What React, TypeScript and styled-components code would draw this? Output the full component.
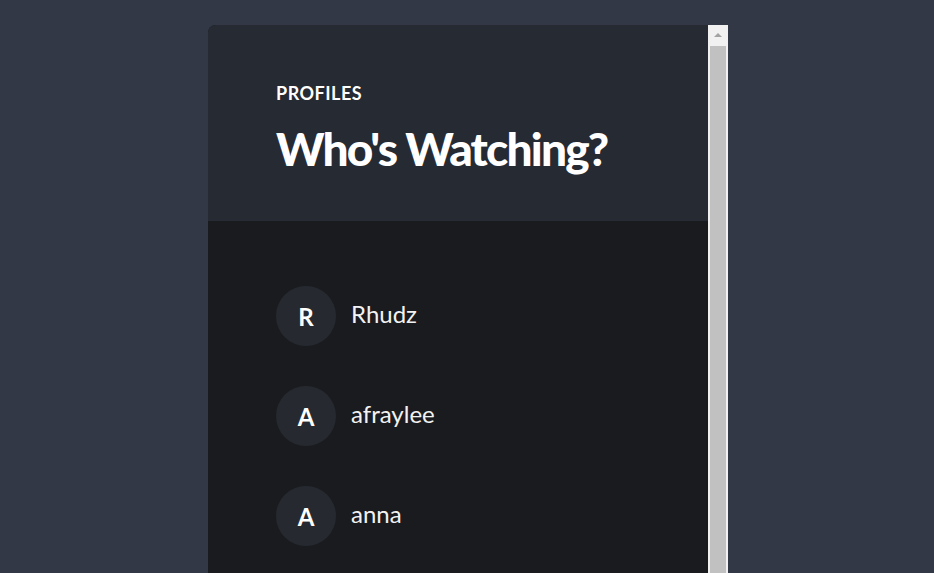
import React from "react";
import styled, { createGlobalStyle } from "styled-components";

const GlobalStyle = createGlobalStyle`
  html, body {
    margin: 0;
    padding: 0;
    overflow: hidden;
    background: #333846;
    font-family: "Lato", "Liberation Sans", sans-serif;
  }
`;

const Page = styled.div`
  display: flex;
  justify-content: center;
  padding: 25px 0 0 2px;
`;

const Panel = styled.div`
  display: flex;
  width: 520px;
  height: 640px;
  border-radius: 8px 0 0 0;
  overflow: hidden;
`;

const Content = styled.div`
  width: 500px;
  background: #1a1b1f;
`;

const ScrollBar = styled.div`
  width: 20px;
  background: #f1f1f1;
  display: flex;
  flex-direction: column;
`;

const ArrowButton = styled.div`
  height: 17px;
  display: flex;
  align-items: center;
  justify-content: center;
  padding-top: 2px;
  box-sizing: border-box;

  &::before {
    content: "";
    width: 0;
    height: 0;
    border-left: 4px solid transparent;
    border-right: 4px solid transparent;
    border-bottom: 4px solid #a3a3a3;
  }
`;

const Thumb = styled.div`
  flex: 1;
  margin: 4px 2px 0;
  background: #c1c1c1;
`;

const Header = styled.header`
  background: #262a32;
  height: 196px;
  box-sizing: border-box;
  padding: 58px 68px 0;
`;

const Eyebrow = styled.div`
  color: #ffffff;
  font-size: 18px;
  font-weight: 700;
  letter-spacing: 0.5px;
  line-height: 20px;
`;

const Title = styled.h1`
  margin: 20px 0 0;
  color: #ffffff;
  font-size: 46px;
  font-weight: 900;
  letter-spacing: -1.8px;
  line-height: 52px;
`;

const ProfileList = styled.ul`
  list-style: none;
  margin: 0;
  padding: 65px 68px 90px;
  display: flex;
  flex-direction: column;
  gap: 40px;
`;

const ProfileRow = styled.li`
  display: flex;
  align-items: center;
  gap: 15px;
  height: 60px;
`;

const Avatar = styled.div`
  width: 60px;
  height: 60px;
  border-radius: 50%;
  background: #262a30;
  color: #ffffff;
  display: flex;
  align-items: center;
  justify-content: center;
  font-size: 24px;
  font-weight: 700;
`;

const Name = styled.span`
  color: #f2f2f2;
  font-size: 24px;
  font-weight: 400;
  margin-top: -6px;
`;

const profiles = ["Rhudz", "afraylee", "anna"];

export default function App() {
  return (
    <>
      <GlobalStyle />
      <Page>
        <Panel>
          <Content>
            <Header>
              <Eyebrow>PROFILES</Eyebrow>
              <Title>Who's Watching?</Title>
            </Header>
            <ProfileList>
              {profiles.map((name) => (
                <ProfileRow key={name}>
                  <Avatar>{name[0].toUpperCase()}</Avatar>
                  <Name>{name}</Name>
                </ProfileRow>
              ))}
            </ProfileList>
          </Content>
          <ScrollBar>
            <ArrowButton />
            <Thumb />
          </ScrollBar>
        </Panel>
      </Page>
    </>
  );
}
